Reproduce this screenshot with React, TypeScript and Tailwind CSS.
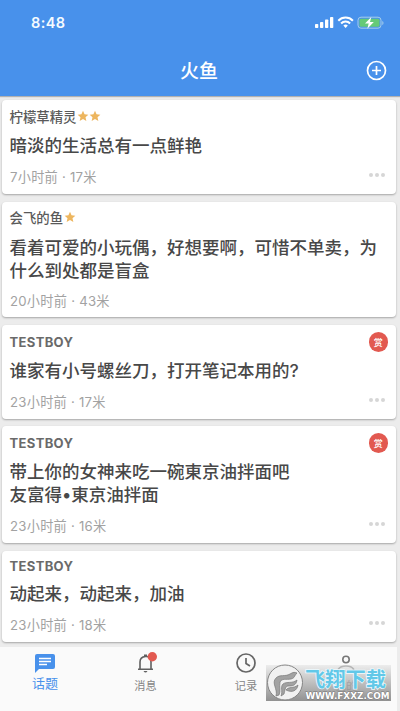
import React from 'react';

type Post = {
  author: string;
  stars: number;
  lines: string[];
  meta: string;
  reward: boolean;
  more: boolean;
  frame: string;
  bodyTop: string;
  metaTop: string;
};

const posts: Post[] = [
  { author: '柠檬草精灵', stars: 2, lines: ['暗淡的生活总有一点鲜艳'], meta: '7小时前 · 17米', reward: false, more: true, frame: 'h-[94px] mb-[8px] pt-[7px]', bodyTop: 'mt-[9px]', metaTop: 'mt-[11px]' },
  { author: '会飞的鱼', stars: 1, lines: ['看着可爱的小玩偶，好想要啊，可惜不单卖，为', '什么到处都是盲盒'], meta: '20小时前 · 43米', reward: false, more: false, frame: 'h-[115px] mb-[8px] pt-[6px]', bodyTop: 'mt-[10px]', metaTop: 'mt-[10px]' },
  { author: 'TESTBOY', stars: 0, lines: ['谁家有小号螺丝刀，打开笔记本用的?'], meta: '23小时前 · 17米', reward: true, more: true, frame: 'h-[94px] mb-[7px] pt-[8px]', bodyTop: 'mt-[8px]', metaTop: 'mt-[11px]' },
  { author: 'TESTBOY', stars: 0, lines: ['带上你的女神来吃一碗東京油拌面吧', '友富得•東京油拌面'], meta: '23小时前 · 16米', reward: true, more: true, frame: 'h-[117px] mb-[8px] pt-[8px]', bodyTop: 'mt-[8px]', metaTop: 'mt-[11px]' },
  { author: 'TESTBOY', stars: 0, lines: ['动起来，动起来，加油'], meta: '23小时前 · 18米', reward: false, more: true, frame: 'h-[91px] mb-[5px] pt-[6px]', bodyTop: 'mt-[7px]', metaTop: 'mt-[11px]' },
];

function Star() {
  return (
    <svg className="h-[12px] w-[12px]" viewBox="0 0 24 24" fill="#edb65f">
      <path d="M12 1.500l3.100 7 7.600.8-5.700 5 1.700 7.500L12 18l-6.700 3.800L7 14.300l-5.700-5 7.600-.8z" />
    </svg>
  );
}

function PostCard({ post }: { post: Post }) {
  return (
    <article className={`flex w-[394px] shrink-0 flex-col rounded-[4px] bg-white px-[8px] shadow-[0_1px_2px_rgba(0,0,0,0.3)] ${post.frame}`}>
      <div className="-ml-[0.5px] flex h-[18px] items-center justify-between">
        <div className="flex items-center text-[13.400px] font-medium leading-[18px] text-[#5a5a5a]">
          {post.stars ? <span className="mr-[0.5px]">{post.author}</span> : <span className="font-[Inter] text-[13px] font-bold tracking-[0.350px] text-[#6a6a6a]">{post.author}</span>}
          {Array.from({ length: post.stars }, (_, i) => <Star key={i} />)}
        </div>
        {post.reward && (
          <span className="flex h-[19.500px] w-[19.500px] items-center justify-center rounded-full bg-[#e25950] text-[9px] font-medium leading-none text-white">赏</span>
        )}
      </div>
      <div className={`-ml-[0.5px] font-[Inter,'Noto_Sans_CJK_SC',sans-serif] text-[17.500px] font-medium leading-[23px] text-[#484848] ${post.bodyTop}`}>
        {post.lines.map((line) => <p key={line} className="h-[23px] whitespace-nowrap">{line}</p>)}
      </div>
      <div className={`flex h-[18px] items-center justify-between ${post.metaTop}`}>
        <span className="font-[Inter,'Noto_Sans_CJK_SC',sans-serif] text-[13.200px] leading-[18px] tracking-[0.250px] text-[#a2a2a2]">{post.meta}</span>
        {post.more && (
          <span className="mr-[3.500px] flex gap-[2px] self-start pt-[5px]">
            <i className="h-[4px] w-[4px] rounded-full bg-[#d6d6d6]" />
            <i className="h-[4px] w-[4px] rounded-full bg-[#d6d6d6]" />
            <i className="h-[4px] w-[4px] rounded-full bg-[#d6d6d6]" />
          </span>
        )}
      </div>
    </article>
  );
}

function StatusIcons() {
  return (
    <svg className="h-[14px] w-[70px]" viewBox="0 0 70 14">
      <g fill="#fff">
        <rect x="0" y="8" width="3.300" height="4" rx="0.800" />
        <rect x="5" y="6" width="3.300" height="6" rx="0.800" />
        <rect x="10" y="3.500" width="3.300" height="8.500" rx="0.800" />
        <rect x="15" y="1" width="3.300" height="11" rx="0.800" />
      </g>
      <g fill="none" stroke="#fff" strokeWidth="2">
        <path d="M23.300 4.700a10 10 0 0 1 14.600 0" />
        <path d="M26.100 7.500a6 6 0 0 1 9 0" />
      </g>
      <path d="M28.400 9.600a3.200 3.200 0 0 1 4.400 0L30.600 12z" fill="#fff" />
      <rect x="43" y="1.200" width="23" height="11" rx="3" fill="none" stroke="#a4cdea" />
      <rect x="44.500" y="2.700" width="20" height="8" rx="1.500" fill="#65ca77" />
      <path d="M67.300 5v4c1.600-.6 1.600-3.400 0-4z" fill="#a4cdea" />
      <path d="M56.300 1l-6.300 6.600h3.700L52.300 12.800l6.500-6.900H55z" fill="#fff" />
    </svg>
  );
}

function Watermark() {
  return (
    <div className="absolute left-[266px] top-[665px] h-[36px] w-[125px] bg-linear-to-b from-[#e4e4e4]/60 to-[#8c8c8c]/95">
      <svg className="h-[36px] w-[125px] overflow-visible" viewBox="0 0 125 36">
        <circle cx="19" cy="17.500" r="17.500" fill="#f1f1f1" stroke="#858585" />
        <g fill="#a2a2a2" stroke="#777" strokeWidth="0.700">
          <path d="M10 31C12 24 5 18 10 13c4-4 9-1 14-4 3-2 5-2 7-1-3 3-2 5-6 6-5 1-9-1-11 3-1 5 1 9-1 13z" />
          <path d="M15 31c2-5-1-9 2-12 4-3 9 0 14-4-1 6-5 6-9 6-3 0-3 5-4 8z" />
          <path d="M20 25c3-4 7-1 12-5-1 6-6 8-12 5z" />
        </g>
        <text x="39" y="21.500" textLength="81" lengthAdjust="spacingAndGlyphs" fontFamily="Noto Sans CJK SC" fontSize="20.500" fontWeight="bold" fill="#62c8e8" stroke="#eefaff" strokeWidth="1.500" paintOrder="stroke">飞翔下载</text>
        <text x="39.500" y="33.500" textLength="84" lengthAdjust="spacingAndGlyphs" fontFamily="DejaVu Sans" fontSize="8" fontWeight="bold" fill="#fff" stroke="#777" strokeWidth="0.800" paintOrder="stroke">WWW.FXXZ.COM</text>
      </svg>
    </div>
  );
}

export default function App() {
  return (
    <main className="relative flex h-[711px] w-[400px] flex-col overflow-hidden bg-[#ececec] font-['Noto_Sans_CJK_SC',sans-serif]">
      <header className="flex h-[96px] shrink-0 flex-col bg-[#4891eb] shadow-[0_1px_1px_rgba(0,0,0,0.25)]">
        <div className="flex h-[46px] items-center justify-between pl-[31px] pr-[15px]">
          <span className="font-[Inter] text-[14.500px] font-semibold tracking-[0.400px] text-[#f4fbff]">8:48</span>
          <StatusIcons />
        </div>
        <div className="grid h-[50px] grid-cols-[1fr_auto_1fr] items-center pr-[13px]">
          <h1 className="col-start-2 -mt-[2px] ml-[11px] text-[19px] font-medium leading-[24px] text-white">火鱼</h1>
          <svg className="-mt-[2px] h-[21px] w-[21px] justify-self-end" viewBox="0 0 21 21" fill="none" stroke="#fff" strokeWidth="1.700">
            <circle cx="10.500" cy="10.500" r="9" />
            <path d="M10.500 6v9M6 10.500h9" />
          </svg>
        </div>
      </header>
      <section className="flex flex-col pl-[2px] pt-[4px]">
        {posts.map((post, i) => <PostCard key={i} post={post} />)}
      </section>
      <nav className="grid h-[64px] w-[397px] shrink-0 grid-cols-[90px_111px_90px_110px] bg-[#fafafa] text-[11.200px] leading-[14px] text-[#858585]">
        <div className="flex flex-col items-center pt-[7px] text-[13px] text-[#4891eb]">
          <svg className="h-[19px] w-[20px]" viewBox="0 0 20 19"><path d="M2 0h16q2 0 2 2v11q0 2-2 2H4l-4 4V2q0-2 2-2z" fill="#4891eb" /><path d="M4 4.500h12M4 7.500h12M4 10.500h8" stroke="#fff" strokeWidth="1.300" /></svg>
          <span className="mt-[3px]">话题</span>
        </div>
        <div className="flex flex-col items-center pt-[5px]">
          <svg className="h-[22px] w-[24px]" viewBox="0 0 24 22"><path d="M6 16.500V10q0-5 5.500-5.500T17 10v6.500M4 17.300h15" fill="none" stroke="#606060" strokeWidth="1.600" /><path d="M10 4V2.500h3V4zM9.500 19h4q-2 3-4 0z" fill="#606060" /><circle cx="18.300" cy="4.700" r="4.700" fill="#e25950" /></svg>
          <span className="mt-[4px]">消息</span>
        </div>
        <div className="flex flex-col items-center pt-[6px]">
          <svg className="h-[20px] w-[20px]" viewBox="0 0 20 20" fill="none" stroke="#666" strokeWidth="1.700"><circle cx="10" cy="10" r="9" /><path d="M10 5v5.500l4 2.500" /></svg>
          <span className="mt-[5px]">记录</span>
        </div>
        <div className="flex flex-col items-center pt-[8px]">
          <svg className="h-[18px] w-[20px]" viewBox="0 0 20 18" fill="none" stroke="#777" strokeWidth="1.600"><circle cx="10" cy="4.500" r="3.200" /><path d="M2.500 16v-2q2-3 7.500-3t7.500 3v2z" /></svg>
          <span className="mt-[5px]">我的</span>
        </div>
      </nav>
      <Watermark />
    </main>
  );
}
